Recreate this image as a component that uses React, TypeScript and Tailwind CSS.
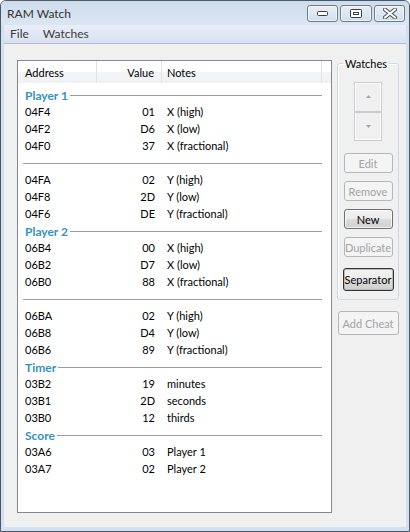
import React from 'react';

type Row =
  | { kind: 'group'; label: string }
  | { kind: 'sep' }
  | { kind: 'item'; addr: string; val: string; note: string };

const rows: Row[] = [
  { kind: 'group', label: 'Player 1' },
  { kind: 'item', addr: '04F4', val: '01', note: 'X (high)' },
  { kind: 'item', addr: '04F2', val: 'D6', note: 'X (low)' },
  { kind: 'item', addr: '04F0', val: '37', note: 'X (fractional)' },
  { kind: 'sep' },
  { kind: 'item', addr: '04FA', val: '02', note: 'Y (high)' },
  { kind: 'item', addr: '04F8', val: '2D', note: 'Y (low)' },
  { kind: 'item', addr: '04F6', val: 'DE', note: 'Y (fractional)' },
  { kind: 'group', label: 'Player 2' },
  { kind: 'item', addr: '06B4', val: '00', note: 'X (high)' },
  { kind: 'item', addr: '06B2', val: 'D7', note: 'X (low)' },
  { kind: 'item', addr: '06B0', val: '88', note: 'X (fractional)' },
  { kind: 'sep' },
  { kind: 'item', addr: '06BA', val: '02', note: 'Y (high)' },
  { kind: 'item', addr: '06B8', val: 'D4', note: 'Y (low)' },
  { kind: 'item', addr: '06B6', val: '89', note: 'Y (fractional)' },
  { kind: 'group', label: 'Timer' },
  { kind: 'item', addr: '03B2', val: '19', note: 'minutes' },
  { kind: 'item', addr: '03B1', val: '2D', note: 'seconds' },
  { kind: 'item', addr: '03B0', val: '12', note: 'thirds' },
  { kind: 'group', label: 'Score' },
  { kind: 'item', addr: '03A6', val: '03', note: 'Player 1' },
  { kind: 'item', addr: '03A7', val: '02', note: 'Player 2' },
];

// caption buttons of the title bar
const CaptionButton: React.FC<{ children: React.ReactNode; w: string }> = ({ children, w }) => (
  <div
    className={`${w} h-[17px] flex items-center justify-center rounded-[3px] border border-[#6d7a8c] bg-[linear-gradient(#e9eff7,#d3deec)] shadow-[inset_0_0_0_1px_rgba(255,255,255,0.6)]`}
  >
    {children}
  </div>
);

const WinButton: React.FC<{ label: string; w?: string; h?: string; state?: 'disabled' | 'normal' | 'default' }> = ({
  label,
  w = 'w-[49px]',
  h = 'h-[20px]',
  state = 'disabled',
}) => {
  const look =
    state === 'disabled'
      ? 'border-[#b4b8bb] bg-[#f4f4f4] text-[#a3a3a3]'
      : state === 'normal'
      ? 'border-[#707070] bg-[linear-gradient(#f2f2f2_0%,#ebebeb_50%,#dddddd_51%,#cfcfcf_100%)] text-black shadow-[inset_0_0_0_1px_rgba(255,255,255,0.7)]'
      : 'border-[#333] bg-[linear-gradient(#f2f2f2_0%,#ebebeb_50%,#dddddd_51%,#cfcfcf_100%)] text-black shadow-[inset_0_0_0_1px_#b9b9b9]';
  return (
    <div className={`${w} ${h} flex items-center justify-center rounded-[3px] border text-[11px] leading-none ${look}`}>
      {label}
    </div>
  );
};

const ListRow: React.FC<{ row: Row }> = ({ row }) => {
  if (row.kind === 'group') {
    return (
      <div className="h-[17px] flex items-center pl-[7px] pr-[9px]">
        <span className="font-bold text-[#3592bf] text-[12px]">{row.label}</span>
        <div className="flex-1 h-px bg-[#9c9c9c] ml-[2px]" />
      </div>
    );
  }
  if (row.kind === 'sep') {
    return (
      <div className="h-[17px] flex items-center pl-[5px] pr-[9px]">
        <div className="flex-1 h-px bg-[#9c9c9c]" />
      </div>
    );
  }
  return (
    <div className="h-[17px] flex items-center pl-[7px] text-black">
      <span className="w-[100px]">{row.addr}</span>
      <span className="w-[30px] text-right">{row.val}</span>
      <span className="ml-[12px]">{row.note}</span>
    </div>
  );
};

export default function App() {
  return (
    <div className="w-[410px] h-[532px] flex flex-col border border-[#4b5869] rounded-t-[6px] bg-[#d4e0ee] overflow-hidden font-['Lato','Noto_Sans',sans-serif] text-[11px]">
      {/* title bar */}
      <div className="h-[24px] flex items-center pl-[6px] pr-[4px] bg-[linear-gradient(#cfdcec,#dbe6f3)]">
        <span className="text-[12px] text-[#333] pt-[2px]">RAM Watch</span>
        <div className="ml-auto flex gap-[2px]">
          <CaptionButton w="w-[31px]">
            <svg width="11" height="5" viewBox="0 0 11 5">
              <rect x="0.5" y="0.5" width="10" height="4" rx="1" fill="#fff" stroke="#3a3f47" />
            </svg>
          </CaptionButton>
          <CaptionButton w="w-[32px]">
            <svg width="12" height="9" viewBox="0 0 12 9">
              <rect x="0.5" y="0.5" width="11" height="8" rx="1" fill="#fff" stroke="#3a3f47" />
              <rect x="3.5" y="3.5" width="5" height="2" fill="#fff" stroke="#3a3f47" />
            </svg>
          </CaptionButton>
          <CaptionButton w="w-[31px]">
            <svg width="14" height="11" viewBox="0 0 14 11">
              <path d="M2 1.5 L12 9.5 M12 1.5 L2 9.5" stroke="#4a4f57" strokeWidth="4" strokeLinecap="square" />
              <path d="M2 1.5 L12 9.5 M12 1.5 L2 9.5" stroke="#fff" strokeWidth="2" strokeLinecap="square" />
            </svg>
          </CaptionButton>
        </div>
      </div>

      <div className="flex-1 flex flex-col px-[3px] pb-[4px]">
        {/* menu bar */}
        <div className="h-[19px] flex items-center gap-[14px] pl-[6px] text-[12px] text-[#3b3b3b] bg-[linear-gradient(#e9eef9,#d9e1f3)] border-b border-[#b3bcd2]">
          <span>File</span>
          <span>Watches</span>
        </div>

        {/* client area */}
        <div className="flex-1 flex items-start bg-[#f0f0f0] pt-[12px] pl-[13px] pr-[6px]">
          {/* list */}
          <div className="mt-[4px] w-[315px] h-[453px] border border-[#828790] bg-white flex flex-col">
            <div className="h-[22px] flex bg-[linear-gradient(#ffffff_0%,#ffffff_48%,#f3f4f6_52%,#f1f2f4_100%)] text-black">
              <div className="w-[79px] pl-[7px] pt-[3px] flex items-center border-r border-[#e1e3e6]">Address</div>
              <div className="w-[65px] pr-[7px] pt-[3px] flex items-center justify-end border-r border-[#e1e3e6]">Value</div>
              <div className="w-[160px] pl-[5px] pt-[3px] flex items-center border-r border-[#e1e3e6]">Notes</div>
              <div className="flex-1" />
            </div>
            <div className="pt-[4px] flex flex-col">
              {rows.map((r, i) => (
                <ListRow key={i} row={r} />
              ))}
            </div>
          </div>

          {/* right panel */}
          <div className="ml-[5px] w-[62px] flex flex-col items-center">
            <fieldset className="w-full border border-[#d0d8df] rounded-[3px] shadow-[inset_1px_1px_0_#fff] flex flex-col items-center pb-[8px]">
              <legend className="ml-[5px] px-[2px] leading-[15px] text-[11px] text-black">Watches</legend>
              <div className="mt-[11px] w-[28px] h-[59px] flex flex-col border border-[#c9cdd1] bg-[#f0f0f0] shadow-[inset_0_0_0_1px_#fff]">
                <div className="flex-1 flex items-center justify-center border-b-2 border-[#c9cdd1]">
                  <svg width="5" height="3" viewBox="0 0 5 3">
                    <path d="M0 3 L2.5 0 L5 3 Z" fill="#a6a6a6" />
                  </svg>
                </div>
                <div className="flex-1 flex items-center justify-center">
                  <svg width="5" height="3" viewBox="0 0 5 3">
                    <path d="M0 0 L2.5 3 L5 0 Z" fill="#a6a6a6" />
                  </svg>
                </div>
              </div>
              <div className="mt-[12px]">
                <WinButton label="Edit" />
              </div>
              <div className="mt-[8px]">
                <WinButton label="Remove" />
              </div>
              <div className="mt-[8px]">
                <WinButton label="New" state="normal" />
              </div>
              <div className="mt-[8px]">
                <WinButton label="Duplicate" />
              </div>
              <div className="mt-[11px]">
                <WinButton label="Separator" state="default" w="w-[51px]" h="h-[23px]" />
              </div>
            </fieldset>
            <div className="mt-[11px]">
              <WinButton label="Add Cheat" w="w-[61px]" h="h-[24px]" />
            </div>
          </div>
        </div>
      </div>
    </div>
  );
}
